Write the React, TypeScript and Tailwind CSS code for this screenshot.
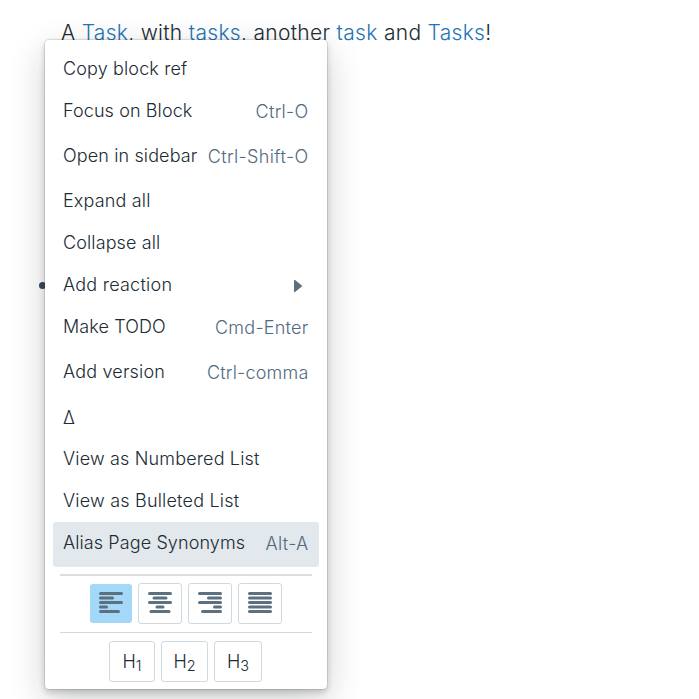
import React from "react";

type Item = { label: string; key?: string; h: string; ls: string; ks?: string; sub?: boolean; active?: boolean };

const items: Item[] = [
  { label: "Copy block ref", h: "h-[42px]", ls: "tracking-[0.14px]" },
  { label: "Focus on Block", key: "Ctrl-O", h: "h-[45px]", ls: "tracking-[0.1px]", ks: "tracking-[0.3px]" },
  { label: "Open in sidebar", key: "Ctrl-Shift-O", h: "h-[45px]", ls: "tracking-[0.12px]", ks: "tracking-[0.38px]" },
  { label: "Expand all", h: "h-[42px]", ls: "tracking-[0.16px]" },
  { label: "Collapse all", h: "h-[42px]", ls: "tracking-[0.12px]" },
  { label: "Add reaction", h: "h-[42px]", ls: "tracking-[0.24px]", sub: true },
  { label: "Make TODO", key: "Cmd-Enter", h: "h-[45px]", ls: "tracking-[0.1px]", ks: "tracking-[0.25px]" },
  { label: "Add version", key: "Ctrl-comma", h: "h-[45px]", ls: "tracking-[0.18px]", ks: "tracking-[0.2px]" },
  { label: "∆", h: "h-[42px]", ls: "tracking-normal pt-px" },
  { label: "View as Numbered List", h: "h-[42px]", ls: "tracking-[0.16px]" },
  { label: "View as Bulleted List", h: "h-[42px]", ls: "tracking-[0.2px]" },
  { label: "Alias Page Synonyms", key: "Alt-A", h: "h-[45px]", ls: "tracking-[0.1px]", ks: "tracking-[0.35px]", active: true },
];

const L = ({ children }: { children: React.ReactNode }) => <span className="text-[#2474b5]">{children}</span>;

// Each row is [x offset, width] of one bar in the 24px wide icon.
const aligns: number[][][] = [
  [[0, 24], [0, 15], [0, 24], [0, 9], [0, 21]],
  [[0, 24], [4.5, 15], [0, 24], [7.5, 9], [1.5, 21]],
  [[0, 24], [9, 15], [0, 24], [15, 9], [3, 21]],
  [[0, 24], [0, 24], [0, 24], [0, 24], [0, 24]],
];

const headings = [
  { n: 1, w: "w-[46px]" },
  { n: 2, w: "w-[47px]" },
  { n: 3, w: "w-[48px]" },
];

export default function App() {
  return (
    <div className="relative h-[699px] w-[699px] overflow-hidden bg-white font-['Inter',sans-serif] font-light text-[#202b33]">
      <p className="pl-[61px] pt-[18px] text-[21px] leading-[30px] tracking-[0.31px] whitespace-nowrap">
        A <L>Task</L>, with <L>tasks</L>, another <L>task</L> and <L>Tasks</L>!
      </p>
      <span className="absolute left-[39px] top-[282px] size-[7px] rounded-full bg-[#394b59]" />
      <div className="absolute left-[45px] top-[40px] h-[649px] w-[282px] rounded-[4px] bg-white px-2 pt-2 shadow-[0_0_0_1px_rgba(16,22,26,0.1),0_3px_6px_rgba(16,22,26,0.2),0_12px_36px_rgba(16,22,26,0.2)]">
        {items.map((it) => (
          <div key={it.label} className={`flex w-[266px] justify-between rounded-[3px] pl-[10px] pr-[10.5px] pt-[8px] text-[18px] leading-[26px] whitespace-nowrap ${it.h} ${it.active ? "bg-[#e3e8ec]" : ""}`}>
            <span className={it.ls}>{it.label}</span>
            {it.key && <span className={`pt-px text-[#506a80] ${it.ks}`}>{it.key}</span>}
            {it.sub && (
              <svg className="mr-[6.5px] mt-[7px]" width="8" height="14" viewBox="0 0 8 14"><path d="M0 1.5v11q0 1 1 .5l6.6-5.2q.8-.8 0-1.6L1 1Q0 .5 0 1.5z" fill="#5c7080" /></svg>
            )}
          </div>
        ))}
        <div className="ml-[7px] mt-[7px] w-[252px] border-t-2 border-[#dcdddd]" />
        <div className="mt-[7px] flex gap-[6px] pl-[37px]">
          {aligns.map((rows, i) => (
            <div key={i} className={`flex justify-center rounded-[3px] ${i === 0 ? "mt-px h-[39px] w-[42px] bg-[#a3d8f8] pt-[8px]" : "h-[41px] w-[44px] border border-[#ced9e0] pt-[8px]"}`}>
              <svg width="24" height="21" viewBox="0 0 24 21">
                {rows.map(([x, w], j) => <rect key={j} x={x} y={j * 4.5} width={w} height="3" rx="1.5" fill="#5c7080" />)}
              </svg>
            </div>
          ))}
        </div>
        <div className="ml-[7px] mt-[8px] w-[252px] border-t border-[#d5d8da]" />
        <div className="mt-[8px] flex gap-[6px] pl-[56px]">
          {headings.map(({ n, w }) => (
            <div key={n} className={`flex h-[41px] items-center justify-center rounded-[3px] border border-[#ced9e0] text-[18px] ${w}`}>
              <span>H<sub className="bottom-[-0.18em] text-[14.5px]">{n}</sub></span>
            </div>
          ))}
        </div>
      </div>
    </div>
  );
}
